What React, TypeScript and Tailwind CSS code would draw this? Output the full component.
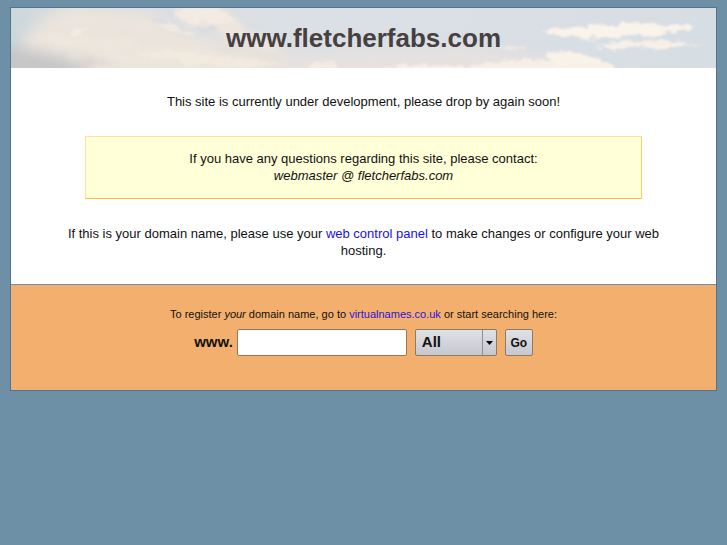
import { useState } from "react";
import type { FormEvent } from "react";

const Sky = () => (
  <svg
    className="absolute inset-0 h-full w-full"
    viewBox="0 0 705 60"
    preserveAspectRatio="none"
    aria-hidden="true"
  >
    <defs>
      <linearGradient id="sky" x1="0" x2="1" y1="0" y2="0">
        <stop offset="0" stopColor="#ccd7dc" />
        <stop offset="0.08" stopColor="#d8dddf" />
        <stop offset="0.3" stopColor="#dbdfe4" />
        <stop offset="0.5" stopColor="#dae0e6" />
        <stop offset="1" stopColor="#d6dde3" />
      </linearGradient>
      <filter id="haze" x="-20%" y="-50%" width="140%" height="200%" colorInterpolationFilters="sRGB">
        <feGaussianBlur stdDeviation="7" />
      </filter>
      <filter id="soft" x="-20%" y="-50%" width="140%" height="200%" colorInterpolationFilters="sRGB">
        <feTurbulence type="fractalNoise" baseFrequency="0.04 0.09" numOctaves="4" seed="8" />
        <feDisplacementMap
          in="SourceGraphic"
          scale="16"
          xChannelSelector="R"
          yChannelSelector="G"
          result="d"
        />
        <feGaussianBlur in="d" stdDeviation="3" />
      </filter>
      <filter id="wisp" x="-20%" y="-50%" width="140%" height="200%" colorInterpolationFilters="sRGB">
        <feTurbulence type="fractalNoise" baseFrequency="0.1 0.2" numOctaves="4" seed="3" />
        <feDisplacementMap
          in="SourceGraphic"
          scale="10"
          xChannelSelector="R"
          yChannelSelector="G"
          result="d"
        />
        <feGaussianBlur in="d" stdDeviation="1" />
      </filter>
    </defs>
    <rect width="705" height="60" fill="url(#sky)" />
    <g filter="url(#haze)">
      <path d="M10 34 L30 12 L60 -4 L140 4 L170 24 L220 34 L270 40 L310 60 L310 76 L20 76Z" fill="#eae4dc" />
      <path d="M-20 34 L30 44 L90 62 L90 80 L-20 80Z" fill="#c6c5c7" />
      <path d="M240 50 L340 42 L450 38 L550 50 L580 76 L240 76Z" fill="#e6e1df" />
    </g>
    <g filter="url(#soft)">
      <path d="M160 -2 L210 0 L240 22 L272 42 L230 36 L200 22 L166 14Z" fill="#ede6de" />
      <path d="M60 50 L120 40 L180 36 L240 46 L290 64 L90 66Z" fill="#ede6dd" fillOpacity="0.8" />
      <path d="M10 30 L70 26 L130 34 L110 40 L40 38Z" fill="#efe8de" fillOpacity="0.7" />
      <path d="M40 50 L80 52 L120 57 L80 59Z" fill="#d3cfcd" fillOpacity="0.7" />
      <path d="M180 36 L220 40 L270 52 L230 48Z" fill="#dddad8" fillOpacity="0.6" />
    </g>
    <g filter="url(#wisp)">
      <path d="M162 4 L190 -2 L214 4 L224 12 L206 18 L192 13 L176 16Z" fill="#f4ece3" fillOpacity="0.8" />
      <path d="M58 23 L74 20 L76 23 L64 27Z" fill="#f6eee2" fillOpacity="0.8" />
      <path d="M148 18 L160 14 L166 20 L178 22 L184 28 L172 26 L158 23Z" fill="#f3ebe3" fillOpacity="0.8" />
      <path d="M136 8 L158 14 L150 16Z" fill="#d3dae1" fillOpacity="0.7" />
      <path d="M182 20 L200 18 L206 22 L190 25Z" fill="#d3dae1" fillOpacity="0.7" />
      <path d="M120 46 L160 42 L220 49 L270 56 L250 60 L180 56Z" fill="#f5ece0" fillOpacity="0.6" />
      <path d="M302 56 L325 52 L325 62 L295 62Z" fill="#f4ece2" />
      <path d="M365 62 L390 57 L460 58 L480 54 L540 52 L600 64 L365 64Z" fill="#f7efe7" />
      <path d="M537 45 L560 43 L592 52 L606 64 L562 62 L540 54Z" fill="#f9f2e9" />
      <path d="M528 24 L565 19 L600 16 L645 15 L684 19 L668 23 L640 28 L600 30 L560 29Z" fill="#faf3ea" />
      <path d="M565 33 L590 31 L584 34Z" fill="#f0ebe6" />
      <path d="M584 38 L604 34 L632 32 L650 33 L694 37 L660 39 L644 42 L620 38 L602 42Z" fill="#f7f0e8" />
      <path d="M485 37 L515 38 L510 42 L490 40Z" fill="#f1ebe4" fillOpacity="0.8" />
    </g>
  </svg>
);

const Header = ({ domain }: { domain: string }) => (
  <header className="relative flex h-[60px] items-center justify-center overflow-hidden">
    <Sky />
    <h1 className="relative text-[26px] font-bold text-[#464040]">{domain}</h1>
  </header>
);

const DomainSearch = () => {
  const [name, setName] = useState("");
  const onSubmit = (e: FormEvent) => {
    e.preventDefault();
  };

  return (
    <form onSubmit={onSubmit} className="mt-2 flex items-center justify-center">
      <label htmlFor="domain" className="mr-1 text-[15px] font-bold">
        www.
      </label>
      <input
        id="domain"
        type="text"
        value={name}
        onChange={(e) => setName(e.target.value)}
        className="mr-2 h-[27px] w-[170px] rounded-xs border border-[#987653] bg-white px-2 text-[15px]"
      />
      <div className="relative mr-2">
        <select
          aria-label="Extension"
          className="block h-[27px] w-[82px] appearance-none rounded-xs border border-[#8d7a69] bg-linear-to-b from-[#dfe1e6] to-[#c5c8cf] pl-[6px] text-[15px] font-bold"
        >
          <option>All</option>
          <option>.co.uk</option>
          <option>.com</option>
          <option>.net</option>
        </select>
        <span className="pointer-events-none absolute inset-y-px right-px flex w-[14px] items-center justify-center border-l border-[#8f9095]">
          <svg width="7" height="4" viewBox="0 0 7 4">
            <path d="M0 0h7L3.500 4z" fill="#000" />
          </svg>
        </span>
      </div>
      <button
        type="submit"
        className="h-[27px] w-7 rounded-xs border border-[#8d7a69] bg-linear-to-b from-[#dfe1e6] to-[#c5c8cf] text-xs font-bold"
      >
        Go
      </button>
    </form>
  );
};

export default function App() {
  return (
    <div className="min-h-screen bg-[#6d90a7] px-[10px] py-[7px] font-['Liberation_Sans',Arial,sans-serif] text-[#111]">
      <div className="border border-[#4f7593] bg-white text-center">
        <Header domain="www.fletcherfabs.com" />

        <main className="px-12 py-[25px] text-[13px] leading-[17px]">
          <p>This site is currently under development, please drop by again soon!</p>
          <div className="mx-[26px] my-[26px] border border-t-[#ffe0a0] border-r-[#ffcc66] border-b-[#ffbf3a] border-l-[#ffe0a0] bg-[#ffffd8] pt-[13px] pb-[14px]">
            <p>If you have any questions regarding this site, please contact:</p>
            <p className="italic">webmaster @ fletcherfabs.com</p>
          </div>
          <p>
            If this is your domain name, please use your{" "}
            <a href="#" className="text-[#1a10e8]">
              web control panel
            </a>{" "}
            to make changes or configure your web hosting.
          </p>
        </main>

        <footer className="border-t border-[#6d90a7] bg-[#f3af6d] pt-[22px] pb-[34px]">
          <p className="text-[11px] leading-[14px]">
            To register <em>your</em> domain name, go to{" "}
            <a href="#" className="text-[#2a14d8]">
              virtualnames.co.uk
            </a>{" "}
            or start searching here:
          </p>
          <DomainSearch />
        </footer>
      </div>
    </div>
  );
}
